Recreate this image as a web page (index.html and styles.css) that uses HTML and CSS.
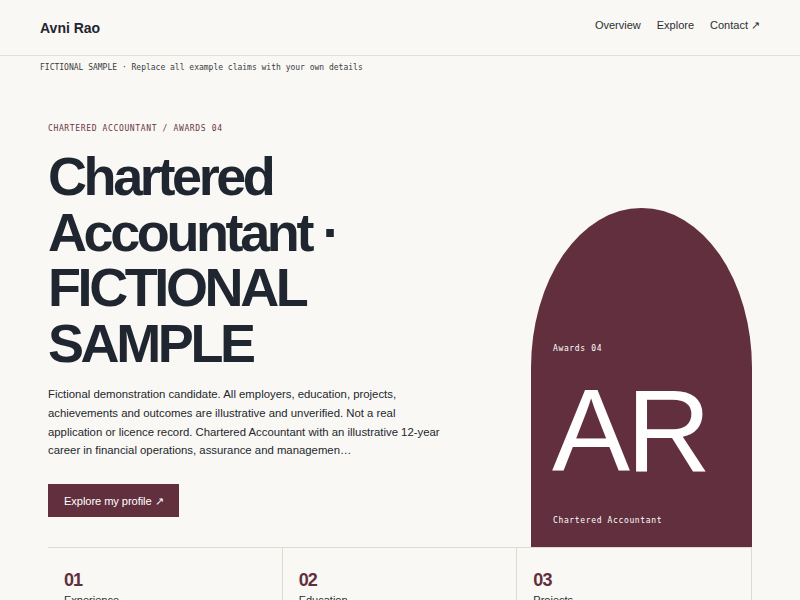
FILE: index.html
```html
<!DOCTYPE html>
<html lang="en">
<head>
<meta charset="utf-8">
<title>Avni Rao</title>
<link rel="stylesheet" href="styles.css">
</head>
<body>
<header class="site-header">
  <div class="brand">Avni Rao</div>
  <nav class="nav">
    <a href="#overview">Overview</a>
    <a href="#explore">Explore</a>
    <a href="#contact">Contact ↗</a>
  </nav>
</header>
<div class="notice">FICTIONAL SAMPLE · Replace all example claims with your own details</div>
<main class="main">
  <section class="hero">
    <div class="hero-text">
      <div class="eyebrow">CHARTERED ACCOUNTANT / AWARDS 04</div>
      <h1 class="title">Chartered Accountant · FICTIONAL SAMPLE</h1>
      <p class="lead">Fictional demonstration candidate. All employers, education, projects, achievements and outcomes are illustrative and unverified. Not a real application or licence record. Chartered Accountant with an illustrative 12-year career in financial operations, assurance and managemen…</p>
      <a class="btn" href="#profile">Explore my profile ↗</a>
    </div>
    <div class="arch">
      <div class="arch-top">Awards 04</div>
      <div class="arch-initials">AR</div>
      <div class="arch-role">Chartered Accountant</div>
    </div>
  </section>
  <section class="cards">
    <div class="card"><div class="card-num">01</div><div class="card-label">Experience</div></div>
    <div class="card"><div class="card-num">02</div><div class="card-label">Education</div></div>
    <div class="card"><div class="card-num">03</div><div class="card-label">Projects</div></div>
  </section>
</main>
</body>
</html>
```
FILE: styles.css
```css
* { box-sizing: border-box; }
html, body { margin: 0; padding: 0; }
body {
  background: #f9f8f4;
  color: #1f2630;
  font-family: "Liberation Sans", Arial, sans-serif;
  overflow: hidden;
}
a { color: inherit; text-decoration: none; }

.site-header {
  height: 56px;
  padding: 0 40px;
  display: flex;
  align-items: center;
  justify-content: space-between;
  border-bottom: 1px solid #e2dfda;
}
.brand {
  font-size: 14px;
  font-weight: 700;
  color: #1f2630;
  padding-top: 1px;
}
.nav {
  display: flex;
  gap: 16px;
  font-size: 11px;
  color: #2a2f36;
  margin-top: -4px;
}

.notice {
  padding: 6px 40px 0;
  height: 24px;
  font-family: "DejaVu Sans Mono", monospace;
  font-size: 8px;
  line-height: 11px;
  color: #3a3d42;
}

.main {
  padding: 0 48px;
}
.hero {
  display: grid;
  grid-template-columns: 1fr 221px;
  align-items: end;
  padding-top: 43px;
}
.hero-text {
  padding-bottom: 30px;
}
.eyebrow {
  font-family: "DejaVu Sans Mono", monospace;
  font-size: 8px;
  line-height: 11px;
  letter-spacing: 0.08em;
  color: #6a3644;
}
.title {
  margin: 15px 0 0;
  font-size: 54px;
  line-height: 55.5px;
  font-weight: 700;
  letter-spacing: -0.063em;
  color: #1f2630;
  max-width: 300px;
}
.lead {
  margin: 14px 0 0;
  font-size: 11.35px;
  line-height: 18.8px;
  color: #22272e;
  max-width: 400px;
}
.btn {
  display: inline-block;
  margin-top: 24px;
  background: #612f3d;
  color: #ffffff;
  font-size: 11.2px;
  line-height: 14px;
  padding: 10px 16px 9px;
  letter-spacing: -0.01em;
}

.arch {
  height: 339px;
  background: #612f3d;
  color: #ffffff;
  border-radius: 110px 110px 0 0 / 160px 160px 0 0;
  display: flex;
  flex-direction: column;
  justify-content: flex-end;
  padding: 0 22px 20px;
}
.arch-top,
.arch-role {
  font-family: "DejaVu Sans Mono", monospace;
  font-size: 8px;
  line-height: 12px;
  letter-spacing: 0.08em;
}
.arch-initials {
  margin: 17px 0 26px -1px;
  font-size: 117px;
  line-height: 117px;
  letter-spacing: -0.03em;
  font-weight: 400;
}

.cards {
  display: grid;
  grid-template-columns: repeat(3, 1fr);
  border-top: 1px solid #dedbd5;
}
.card {
  border-right: 1px solid #dedbd5;
  padding: 21px 16px 20px;
  min-height: 120px;
}
.card-num {
  font-size: 18px;
  line-height: 22px;
  font-weight: 700;
  letter-spacing: -0.05em;
  color: #612f3d;
}
.card-label {
  margin-top: 2px;
  font-size: 11px;
  line-height: 14px;
  color: #2a2f36;
}
```
